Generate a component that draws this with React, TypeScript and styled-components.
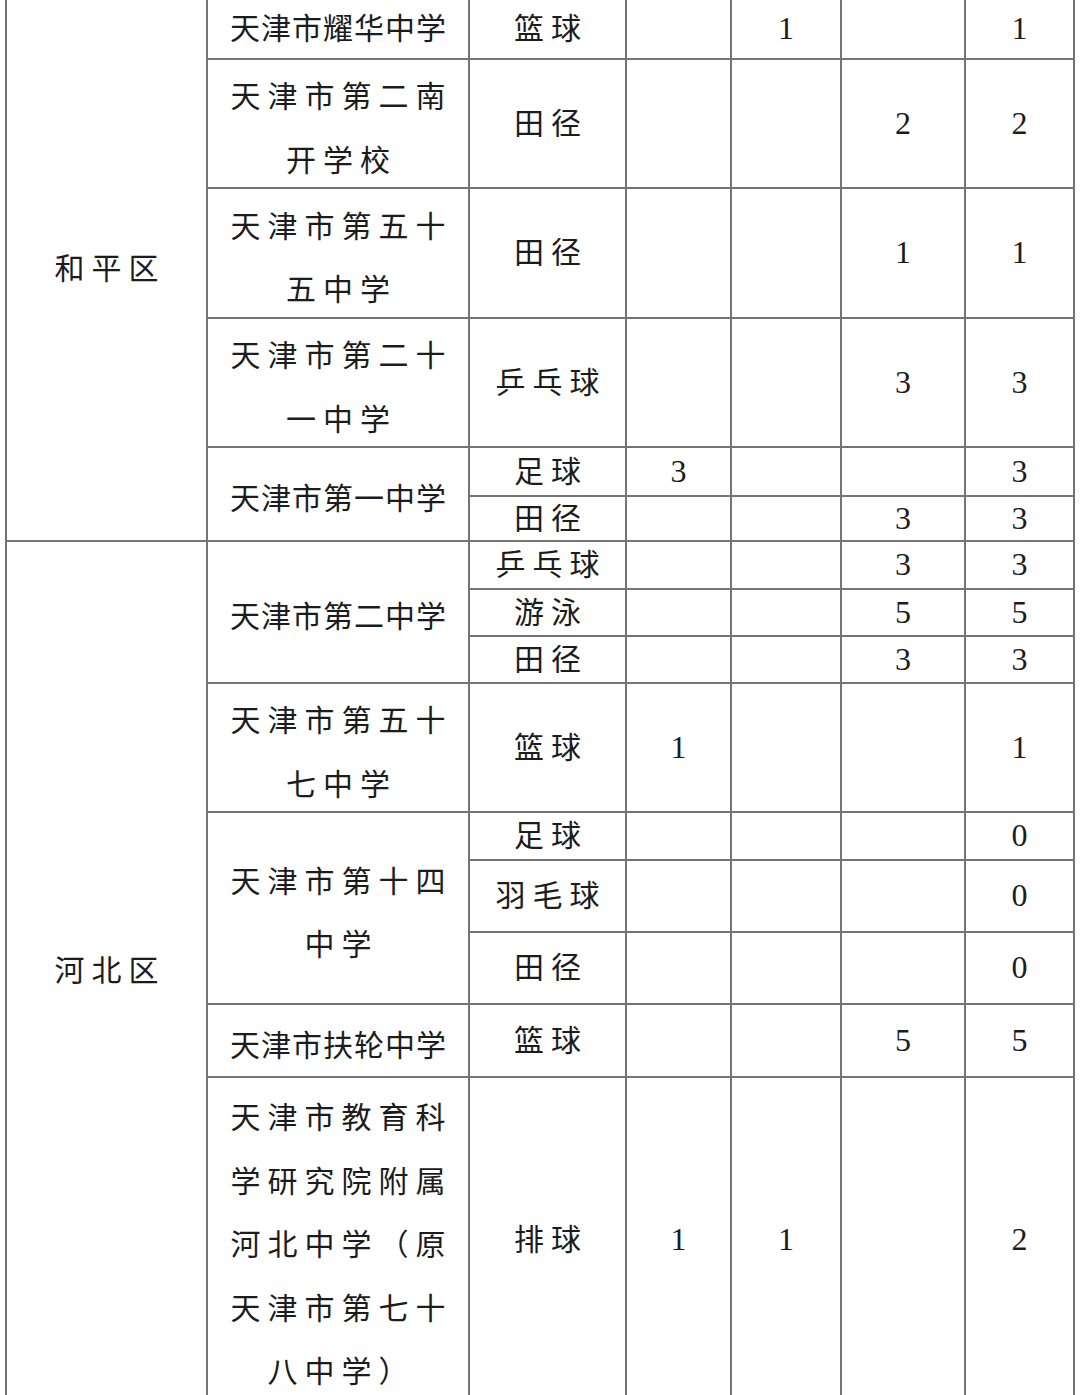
import { createGlobalStyle } from 'styled-components'
import styled from 'styled-components'

const GlobalStyle = createGlobalStyle`
  html, body {
    margin: 0;
    padding: 0;
    background: #ffffff;
  }
  body {
    font-family: "Liberation Serif", "Noto Sans CJK SC", serif;
    color: #1c1c1c;
  }
`

const Sheet = styled.div`
  padding-left: 5px;
`

const Table = styled.table`
  border-collapse: collapse;
  table-layout: fixed;
  width: 1068px;
  font-family: "Liberation Serif", "Noto Sans CJK SC", serif;
  font-weight: 400;
  tr:first-child td {
    border-top: none;
  }
`

const Row = styled.tr<{ $h: number }>`
  height: ${(p) => p.$h}px;
`

const Cell = styled.td`
  border: 2px solid #747474;
  padding: 0;
  text-align: center;
  vertical-align: middle;
  white-space: nowrap;
  overflow: hidden;
`

const Label = styled.span<{ $ls: number }>`
  letter-spacing: ${(p) => p.$ls}px;
  margin-right: -${(p) => p.$ls}px;
`

const DistrictCell = styled(Cell)`
  font-size: 30px;
  padding-bottom: 8px;
`

const SchoolCell = styled(Cell)`
  font-size: 30px;
`

// school names sit a little low in their lines in the source document,
// so the line box is taller than the line pitch
const SchoolLine = styled.div<{ $pitch: number; $drop: number }>`
  height: ${(p) => p.$pitch}px;
  line-height: ${(p) => p.$pitch + p.$drop}px;
`

const SportCell = styled(Cell)`
  font-size: 30px;
  line-height: 1.2;
`

const NumCell = styled(Cell)`
  font-size: 32px;
  line-height: 1.1;
`

function School({
  lines,
  tight,
  rowSpan,
  flat,
}: {
  lines: string[]
  tight?: boolean
  rowSpan?: number
  flat?: boolean
}) {
  const ls = tight ? 1 : 7
  const pitch = lines.length > 1 ? 63.5 : 36
  return (
    <SchoolCell rowSpan={rowSpan}>
      {lines.map((l, i) => (
        <SchoolLine key={i} $pitch={pitch} $drop={flat ? 0 : 10}>
          <Label $ls={ls}>{l}</Label>
        </SchoolLine>
      ))}
    </SchoolCell>
  )
}

function Sport({ name }: { name: string }) {
  return (
    <SportCell>
      <Label $ls={7}>{name}</Label>
    </SportCell>
  )
}

function Nums({ v }: { v: (number | null)[] }) {
  return (
    <>
      {v.map((n, i) => (
        <NumCell key={i}>{n === null ? '' : n}</NumCell>
      ))}
    </>
  )
}

export default function App() {
  return (
    <>
      <GlobalStyle />
      <Sheet>
        <Table>
          <colgroup>
            <col style={{ width: 201 }} />
            <col style={{ width: 262 }} />
            <col style={{ width: 157 }} />
            <col style={{ width: 105 }} />
            <col style={{ width: 110 }} />
            <col style={{ width: 124 }} />
            <col style={{ width: 109 }} />
          </colgroup>
          <tbody>
            <Row $h={59}>
              <DistrictCell rowSpan={6}>
                <Label $ls={7}>和平区</Label>
              </DistrictCell>
              <School lines={['天津市耀华中学']} tight flat />
              <Sport name="篮球" />
              <Nums v={[null, 1, null, 1]} />
            </Row>
            <Row $h={129}>
              <School lines={['天津市第二南', '开学校']} />
              <Sport name="田径" />
              <Nums v={[null, null, 2, 2]} />
            </Row>
            <Row $h={130}>
              <School lines={['天津市第五十', '五中学']} />
              <Sport name="田径" />
              <Nums v={[null, null, 1, 1]} />
            </Row>
            <Row $h={129}>
              <School lines={['天津市第二十', '一中学']} />
              <Sport name="乒乓球" />
              <Nums v={[null, null, 3, 3]} />
            </Row>
            <Row $h={49}>
              <School lines={['天津市第一中学']} tight rowSpan={2} />
              <Sport name="足球" />
              <Nums v={[3, null, null, 3]} />
            </Row>
            <Row $h={45}>
              <Sport name="田径" />
              <Nums v={[null, null, 3, 3]} />
            </Row>
            <Row $h={48}>
              <DistrictCell rowSpan={9}>
                <Label $ls={7}>河北区</Label>
              </DistrictCell>
              <School lines={['天津市第二中学']} tight rowSpan={3} />
              <Sport name="乒乓球" />
              <Nums v={[null, null, 3, 3]} />
            </Row>
            <Row $h={47}>
              <Sport name="游泳" />
              <Nums v={[null, null, 5, 5]} />
            </Row>
            <Row $h={47}>
              <Sport name="田径" />
              <Nums v={[null, null, 3, 3]} />
            </Row>
            <Row $h={129}>
              <School lines={['天津市第五十', '七中学']} />
              <Sport name="篮球" />
              <Nums v={[1, null, null, 1]} />
            </Row>
            <Row $h={48}>
              <School lines={['天津市第十四', '中学']} rowSpan={3} />
              <Sport name="足球" />
              <Nums v={[null, null, null, 0]} />
            </Row>
            <Row $h={72}>
              <Sport name="羽毛球" />
              <Nums v={[null, null, null, 0]} />
            </Row>
            <Row $h={72}>
              <Sport name="田径" />
              <Nums v={[null, null, null, 0]} />
            </Row>
            <Row $h={73}>
              <School lines={['天津市扶轮中学']} tight />
              <Sport name="篮球" />
              <Nums v={[null, null, 5, 5]} />
            </Row>
            <Row $h={326}>
              <School
                lines={['天津市教育科', '学研究院附属', '河北中学（原', '天津市第七十', '八中学）']}
              />
              <Sport name="排球" />
              <Nums v={[1, 1, null, 2]} />
            </Row>
          </tbody>
        </Table>
      </Sheet>
    </>
  )
}
